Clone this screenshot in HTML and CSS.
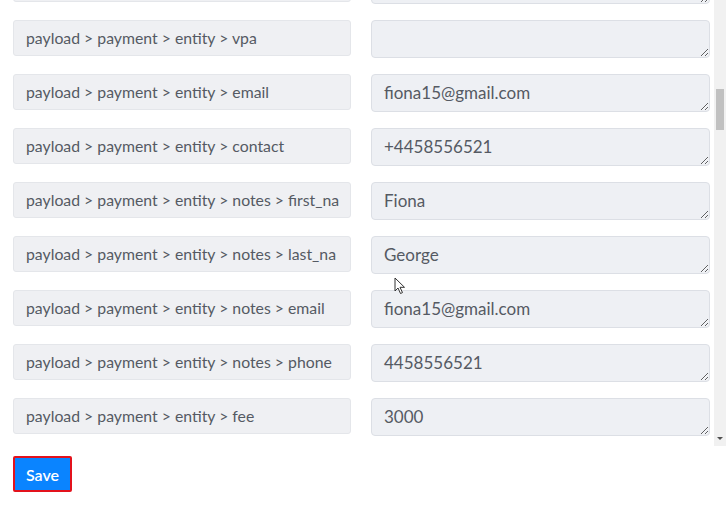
FILE: index.html
```html
<!DOCTYPE html>
<html lang="en">
<head>
  <meta charset="UTF-8" />
  <meta name="viewport" content="width=device-width, initial-scale=1.0" />
  <title>Field Mapping</title>
  <link rel="stylesheet" href="styles.css">
</head>
<body>
  <div class="panel">
    <div class="list">
      <div class="rows">
        <div class="row">
          <div class="field-name"><span></span></div>
          <textarea class="field-value" readonly></textarea>
        </div>
        <div class="row">
          <div class="field-name"><span>payload &gt; payment &gt; entity &gt; vpa</span></div>
          <textarea class="field-value" readonly></textarea>
        </div>
        <div class="row">
          <div class="field-name"><span>payload &gt; payment &gt; entity &gt; email</span></div>
          <textarea class="field-value" readonly>fiona15@gmail.com</textarea>
        </div>
        <div class="row">
          <div class="field-name"><span>payload &gt; payment &gt; entity &gt; contact</span></div>
          <textarea class="field-value" readonly>+4458556521</textarea>
        </div>
        <div class="row">
          <div class="field-name"><span>payload &gt; payment &gt; entity &gt; notes &gt; first_na</span></div>
          <textarea class="field-value" readonly>Fiona</textarea>
        </div>
        <div class="row">
          <div class="field-name"><span>payload &gt; payment &gt; entity &gt; notes &gt; last_na</span></div>
          <textarea class="field-value" readonly>George</textarea>
        </div>
        <div class="row">
          <div class="field-name"><span>payload &gt; payment &gt; entity &gt; notes &gt; email</span></div>
          <textarea class="field-value" readonly>fiona15@gmail.com</textarea>
        </div>
        <div class="row">
          <div class="field-name"><span>payload &gt; payment &gt; entity &gt; notes &gt; phone</span></div>
          <textarea class="field-value" readonly>4458556521</textarea>
        </div>
        <div class="row">
          <div class="field-name"><span>payload &gt; payment &gt; entity &gt; fee</span></div>
          <textarea class="field-value" readonly>3000</textarea>
        </div>
      </div>
    </div>

    <!-- scrollbar of the mapping list -->
    <div class="scrollbar">
      <div class="thumb"></div>
      <div class="arrow-down"></div>
    </div>

    <svg class="cursor" width="12" height="18" viewBox="0 0 12 18">
      <path d="M1 1 L1 14 L4 11 L6.5 16.5 L8.5 15.6 L6 10.3 L10.5 10.3 Z" fill="#fff" stroke="#333" stroke-width="1" stroke-linejoin="round" />
    </svg>
  </div>

  <div class="actions">
    <button class="save-btn">Save</button>
  </div>
</body>
</html>
```

FILE: styles.css
```css
* {
  margin: 0;
  padding: 0;
  box-sizing: border-box;
}

body {
  font-family: Lato, "Open Sans", sans-serif;
  background: #fff;
  color: #555a63;
}

.panel {
  display: flex;
  height: 446px;
  position: relative;
}

.list {
  flex: 1;
  overflow: hidden;
  padding: 0 4px 0 13px;
}

.rows {
  margin-top: -34px;
}

.row {
  display: grid;
  grid-template-columns: 338px 339px;
  column-gap: 20px;
  align-items: start;
  margin-bottom: 16px;
}

.field-name {
  height: 36px;
  line-height: 34px;
  padding: 0 10px 0 12px;
  background: #eff0f3;
  border: 1px solid #e4e6ea;
  border-radius: 3px;
  font-size: 15.8px;
}

.field-name span {
  display: block;
  white-space: nowrap;
  overflow: hidden;
}

.field-value {
  display: block;
  width: 100%;
  height: 38px;
  padding: 8px 12px;
  background: #eef0f4;
  border: 1px solid #dcdfe5;
  border-radius: 4px;
  font-family: Lato, "Open Sans", sans-serif;
  font-size: 17px;
  line-height: 20px;
  color: #555a63;
  resize: vertical;
  overflow: hidden;
  outline: none;
}

.scrollbar {
  width: 12px;
  background: #f1f1f1;
  display: flex;
  flex-direction: column;
  align-items: center;
}

.thumb {
  width: 8px;
  height: 41px;
  margin-top: 89px;
  background: #c1c1c1;
}

.arrow-down {
  margin-top: auto;
  margin-bottom: 6px;
  width: 0;
  height: 0;
  border-left: 3px solid transparent;
  border-right: 3px solid transparent;
  border-top: 3px solid #505050;
}

.cursor {
  position: absolute;
  left: 394px;
  top: 277px;
}

.actions {
  padding: 10px 13px;
}

.save-btn {
  height: 36px;
  padding: 0 11px;
  background: #0a84ff;
  border: 2px solid #e3121c;
  border-radius: 2px;
  color: #fff;
  font-family: Lato, "Open Sans", sans-serif;
  font-size: 16px;
  font-weight: 600;
}
```
